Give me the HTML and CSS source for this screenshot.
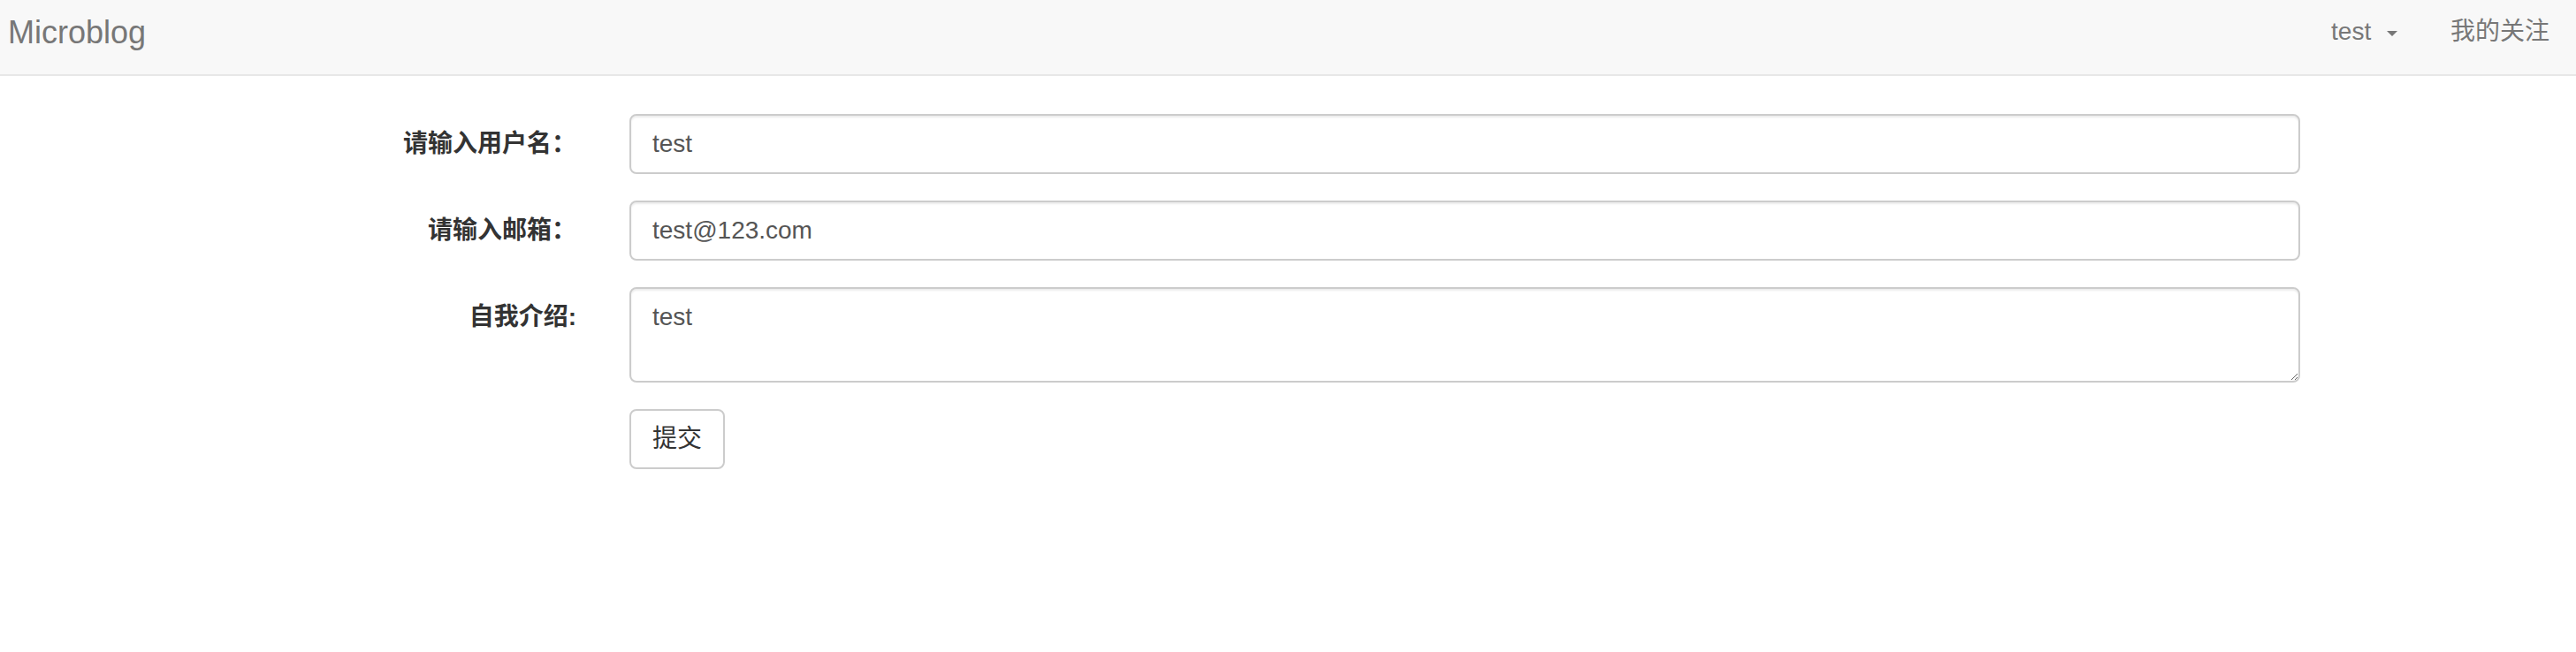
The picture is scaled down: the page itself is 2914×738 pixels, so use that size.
FILE: index.html
```html
<!DOCTYPE html>
<html lang="zh-CN">
<head>
<meta charset="utf-8">
<title>Microblog</title>
<link rel="stylesheet" href="styles.css">
</head>
<body>
<nav class="navbar">
  <a class="brand" href="#">Microblog</a>
  <ul class="nav-right">
    <li><a class="nav-link" href="#">test <span class="caret"></span></a></li>
    <li><a class="nav-link" href="#">我的关注</a></li>
  </ul>
</nav>
<div class="container">
  <form class="form">
    <div class="form-group">
      <label class="label-col" for="username">请输入用户名：</label>
      <div class="field-col"><input class="form-control" id="username" type="text" value="test"></div>
    </div>
    <div class="form-group">
      <label class="label-col" for="email">请输入邮箱：</label>
      <div class="field-col"><input class="form-control" id="email" type="text" value="test@123.com"></div>
    </div>
    <div class="form-group">
      <label class="label-col" for="about">自我介绍:</label>
      <div class="field-col"><textarea class="form-control textarea" id="about">test</textarea></div>
    </div>
    <div class="form-group">
      <div class="label-col"></div>
      <div class="field-col"><button class="btn" type="submit">提交</button></div>
    </div>
  </form>
</div>
</body>
</html>
```
FILE: styles.css
```css
* { box-sizing: border-box; }
html, body {
  margin: 0;
  padding: 0;
  background: #fff;
  font-family: "Liberation Sans", Arial, "Noto Sans CJK SC", sans-serif;
  font-size: 28px;
  line-height: 40px;
  color: #333;
}
a { text-decoration: none; }

.navbar {
  display: flex;
  align-items: flex-start;
  justify-content: space-between;
  height: 86px;
  background: #f8f8f8;
  border-bottom: 2px solid #e7e7e7;
}
.brand {
  padding: 17px 0 0 9px;
  font-size: 36px;
  line-height: 40px;
  color: #777;
}
.nav-right {
  display: flex;
  list-style: none;
  margin: 0;
  padding: 0;
}
.nav-link {
  display: block;
  padding: 16px 30px 0;
  line-height: 40px;
  color: #777;
}
.caret {
  display: inline-block;
  width: 0;
  height: 0;
  margin-left: 10px;
  vertical-align: middle;
  border-top: 6px solid #777;
  border-left: 6px solid transparent;
  border-right: 6px solid transparent;
}

.container {
  width: 2340px;
  margin: 0 0 0 292px;
  padding-top: 43px;
}
.form-group {
  display: flex;
  margin-bottom: 30px;
}
.label-col {
  flex: 0 0 390px;
  padding: 14px 30px 0;
  text-align: right;
  font-weight: bold;
  line-height: 40px;
  color: #333;
}
.field-col {
  flex: 0 0 1950px;
  padding: 0 30px;
}
.form-control {
  display: block;
  width: 100%;
  height: 68px;
  padding: 12px 24px;
  font-family: inherit;
  font-size: 28px;
  line-height: 40px;
  color: #555;
  background: #fff;
  border: 2px solid #ccc;
  border-radius: 8px;
  box-shadow: inset 0 2px 2px rgba(0,0,0,.075);
  outline: none;
  margin: 0;
}
.textarea {
  height: 108px;
  resize: vertical;
}
.btn {
  display: inline-block;
  padding: 12px 24px;
  font-family: inherit;
  font-size: 28px;
  line-height: 40px;
  color: #333;
  background: #fff;
  border: 2px solid #ccc;
  border-radius: 8px;
  cursor: pointer;
}
```
